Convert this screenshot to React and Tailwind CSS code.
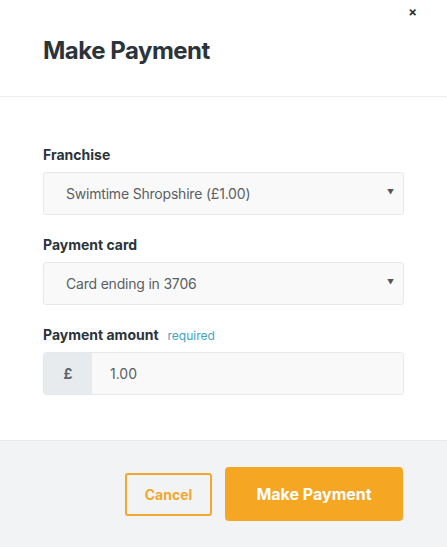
function SelectField({ label, value }) {
  return (
    <div>
      <label className="block text-[14px] font-bold leading-[20px] text-[#2b333b]">{label}</label>
      <div className="mt-[7px] flex h-[43px] items-center justify-between rounded-[3px] border border-[#e6e8ea] bg-[#f9f9f9] pl-[22px] pr-[9px]">
        <span className="text-[14px] tracking-[-0.2px] text-[#5a5f64]">{value}</span>
        <span className="text-[7px] text-[#555]">▼</span>
      </div>
    </div>
  )
}

export default function App() {
  return (
    <div className="flex h-[547px] w-[447px] flex-col bg-white text-[#2b333b]" style={{ fontFamily: 'Inter, "Noto Sans", sans-serif' }}>
      <header className="relative h-[97px] shrink-0 border-b border-[#eeeeee] px-[43px] pt-[33px]">
        <h1 className="text-[24px] font-bold tracking-[-0.5px] text-[#2b333b]">Make Payment</h1>
        <button className="absolute right-[30px] top-[3px] text-[13px] font-bold text-[#333]">×</button>
      </header>

      <main className="flex flex-1 flex-col gap-[20px] px-[43px] pt-[48px]">
        <SelectField label="Franchise" value="Swimtime Shropshire (£1.00)" />
        <SelectField label="Payment card" value="Card ending in 3706" />
        <div>
          <div className="flex items-baseline gap-[9px]">
            <label className="text-[14px] font-bold leading-[20px] text-[#2b333b]">Payment amount</label>
            <span className="text-[12px] text-[#3ea5bf]">required</span>
          </div>
          <div className="mt-[7px] flex h-[43px] overflow-hidden rounded-[3px] border border-[#e6e8ea]">
            <span className="flex w-[48px] items-center justify-center bg-[#e8ebee] text-[14px] font-bold text-[#5b636b]">£</span>
            <span className="flex flex-1 items-center bg-[#f9f9f9] pl-[18px] text-[14px] text-[#5a5f64]">1.00</span>
          </div>
        </div>
      </main>

      <footer className="flex h-[107px] shrink-0 items-center justify-end gap-[13px] border-t border-[#e6e8ea] bg-[#f2f3f5] pr-[44px]">
        <button className="h-[43px] w-[87px] rounded-[3px] border-2 border-[#f0a830] text-[14px] font-bold text-[#f0a830]">Cancel</button>
        <button className="h-[54px] w-[178px] rounded-[4px] bg-[#f5a623] text-[16px] font-bold text-white">Make Payment</button>
      </footer>
    </div>
  )
}
